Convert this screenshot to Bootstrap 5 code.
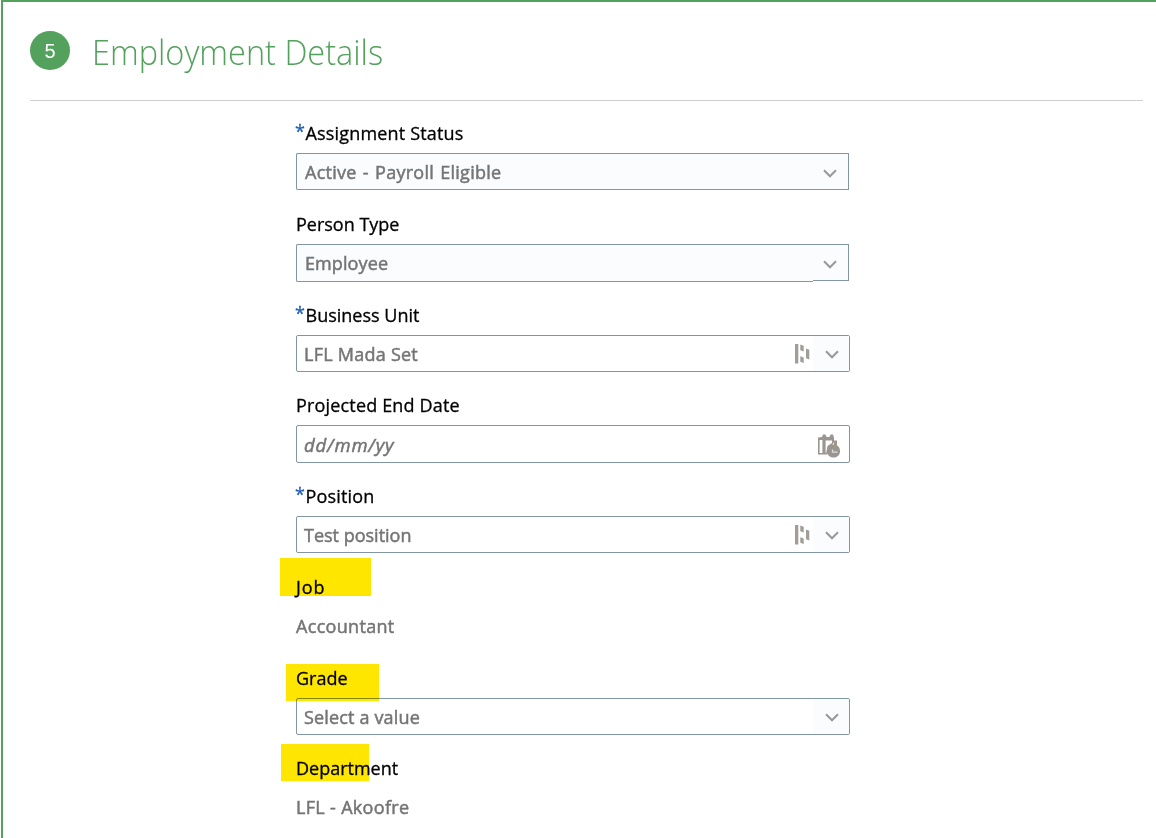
<!DOCTYPE html>
<html lang="en">
<head>
  <meta charset="UTF-8">
  <meta name="viewport" content="width=device-width, initial-scale=1.0">
  <title>Employment Details</title>
  <link href="https://cdn.jsdelivr.net/npm/bootstrap@5.3.0/dist/css/bootstrap.min.css" rel="stylesheet">
  <style>
    body { font-family: "Open Sans", "Noto Sans", sans-serif; color: #111; }
    .panel { height: 838px; border-top: 2px solid #53a15c; border-left: 2px solid #53a15c; margin-left: 1px; padding: 0 13px 0 27px; }
    .step-header { height: 99px; border-bottom: 1px solid #cfcfcf; }
    .step-number { width: 40px; height: 39px; margin-top: 29px; background: #53a15c; font: 20px/40px "Liberation Sans", sans-serif; }
    .step-title { margin: 28px 0 0 22px; font-size: 34.5px; line-height: 44px; font-weight: 300; color: #53a15c; transform: scaleX(.942); transform-origin: left; }
    .fields { width: 554px; margin-left: 266px; padding-top: 12px; font-size: 18px; font-weight: 500; -webkit-text-stroke: .3px; }
    .field { height: 91px; }
    .field-short { height: 90px; }
    .field-label { height: 40px; line-height: 40px; color: #000; }
    .field-label .txt { position: relative; }
    .txt-wide { letter-spacing: .17px; }
    .txt-job { letter-spacing: .9px; }
    .req { width: 10.5px; margin-left: -1px; color: #2360b8; font-size: 18px; line-height: 37px; }
    .field-value { height: 37px; line-height: 37px; color: #757575; -webkit-text-stroke: .5px; }
    .value-plain { line-height: 39px; letter-spacing: .32px; }
    .box { border: 1px solid #8295a3; border-radius: 2px; padding-left: 7px; line-height: 36px; }
    .box-tall { height: 38px; line-height: 38px; }
    .box-select { width: 553px; line-height: 37px; }
    .box-select .main { background: #fbfcfe; border: 1px solid #8295a3; border-right: 0; border-radius: 2px 0 0 2px; padding-left: 8px; height: 37px; }
    .box-select .main-tall { height: 38px; }
    .box-select .arrow { width: 36px; height: 37px; padding: 3px 2px 0 0; background: #fbfcfe; border: 1px solid #8295a3; border-left: 0; }
    .box .arrow { width: 36px; margin-left: 3px; padding: 1px 0 0 2px; background: #fbfcfe; }
    .value-status { letter-spacing: .27px; word-spacing: 1.2px; }
    .value-employee { letter-spacing: .1px; }
    .value-unit { letter-spacing: .25px; }
    .value-select { letter-spacing: .16px; }
    .value-date { font-size: 18.5px; letter-spacing: .85px; }
    .highlight { position: absolute; background: #ffe600; z-index: 0; mix-blend-mode: multiply; }
    .hl-job { left: -16px; top: -9px; width: 91px; height: 38px; }
    .hl-grade { left: -10px; top: 6px; width: 93px; height: 37px; }
    .hl-dept { left: -15px; top: -4px; width: 88px; height: 37px; }
    svg { display: block; }
  </style>
</head>
<body class="bg-white overflow-hidden">
  <svg width="0" height="0" class="position-absolute">
    <symbol id="chevron" viewBox="0 0 14 9">
      <path d="M1 1.2 7 7.2 13 1.2" fill="none" stroke="#9a9a9a" stroke-width="2.1"/>
    </symbol>
    <symbol id="hierarchy" viewBox="0 0 15 20">
      <path d="M0 0h3.3v19.5H0zM5.3 .5 8.7 1.7V7.5L5.3 6.3zM5.3 12.3 8.7 13.5V19L5.3 17.8zM11 4.5 14.3 5.7V15.5L11 14.3z" fill="#a19e9a"/>
    </symbol>
    <symbol id="calendar" viewBox="0 0 23 24">
      <path d="M0 3.5 4 3 5 .5H7.5l1 2.5h3L12.5 .5H15l1 3V8L9 20.5H0z" fill="#9b9691"/>
      <path d="M1.6 6H4.4V19H1.6zM7.6 6.5H14V9L9.5 12 8.2 19h-.6z" fill="#fff"/>
      <circle cx="15.5" cy="17" r="6.6" fill="#999590"/>
      <path d="M16 6.5h3v9h-3z" fill="#a09789"/>
      <path d="M14.5 15.5v2.6H19.5" fill="none" stroke="#dcdcdc" stroke-width="1.3"/>
    </symbol>
  </svg>

  <div class="panel">
    <div class="step-header d-flex">
      <div class="step-number rounded-circle text-white text-center">5</div>
      <h1 class="step-title">Employment Details</h1>
    </div>

    <div class="fields">
      <div class="field">
        <div class="field-label d-flex"><span class="req">*</span><span class="txt txt-wide">Assignment Status</span></div>
        <div class="field-value box-select d-flex">
          <div class="main flex-grow-1 value-status">Active - Payroll Eligible</div>
          <div class="arrow d-flex align-items-center justify-content-center"><svg width="14" height="9"><use href="#chevron"/></svg></div>
        </div>
      </div>

      <div class="field">
        <div class="field-label"><span class="txt">Person Type</span></div>
        <div class="field-value box-select d-flex">
          <div class="main main-tall flex-grow-1 value-employee">Employee</div>
          <div class="arrow d-flex align-items-center justify-content-center"><svg width="14" height="9"><use href="#chevron"/></svg></div>
        </div>
      </div>

      <div class="field field-short">
        <div class="field-label d-flex"><span class="req">*</span><span class="txt">Business Unit</span></div>
        <div class="field-value box d-flex">
          <div class="flex-grow-1 value-unit">LFL Mada Set</div>
          <div class="d-flex align-items-center"><svg width="15" height="20"><use href="#hierarchy"/></svg></div>
          <div class="arrow d-flex align-items-center justify-content-center"><svg width="14" height="9"><use href="#chevron"/></svg></div>
        </div>
      </div>

      <div class="field">
        <div class="field-label"><span class="txt txt-wide">Projected End Date</span></div>
        <div class="field-value box box-tall d-flex">
          <div class="flex-grow-1 fst-italic value-date">dd/mm/yy</div>
          <div class="d-flex align-items-center pe-2 pt-1"><svg width="23" height="24"><use href="#calendar"/></svg></div>
        </div>
      </div>

      <div class="field">
        <div class="field-label d-flex"><span class="req">*</span><span class="txt txt-wide">Position</span></div>
        <div class="field-value box d-flex">
          <div class="flex-grow-1">Test position</div>
          <div class="d-flex align-items-center"><svg width="15" height="20"><use href="#hierarchy"/></svg></div>
          <div class="arrow d-flex align-items-center justify-content-center"><svg width="14" height="9"><use href="#chevron"/></svg></div>
        </div>
      </div>

      <div class="field position-relative">
        <div class="highlight hl-job"></div>
        <div class="field-label"><span class="txt txt-job">Job</span></div>
        <div class="field-value value-plain">Accountant</div>
      </div>

      <div class="field field-short position-relative">
        <div class="highlight hl-grade"></div>
        <div class="field-label"><span class="txt">Grade</span></div>
        <div class="field-value box d-flex">
          <div class="flex-grow-1 value-select">Select a value</div>
          <div class="arrow d-flex align-items-center justify-content-center"><svg width="14" height="9"><use href="#chevron"/></svg></div>
        </div>
      </div>

      <div class="position-relative">
        <div class="highlight hl-dept"></div>
        <div class="field-label"><span class="txt">Department</span></div>
        <div class="field-value value-plain">LFL - Akoofre</div>
      </div>
    </div>
  </div>

  <script src="https://cdn.jsdelivr.net/npm/bootstrap@5.3.0/dist/js/bootstrap.bundle.min.js"></script>
</body>
</html>
